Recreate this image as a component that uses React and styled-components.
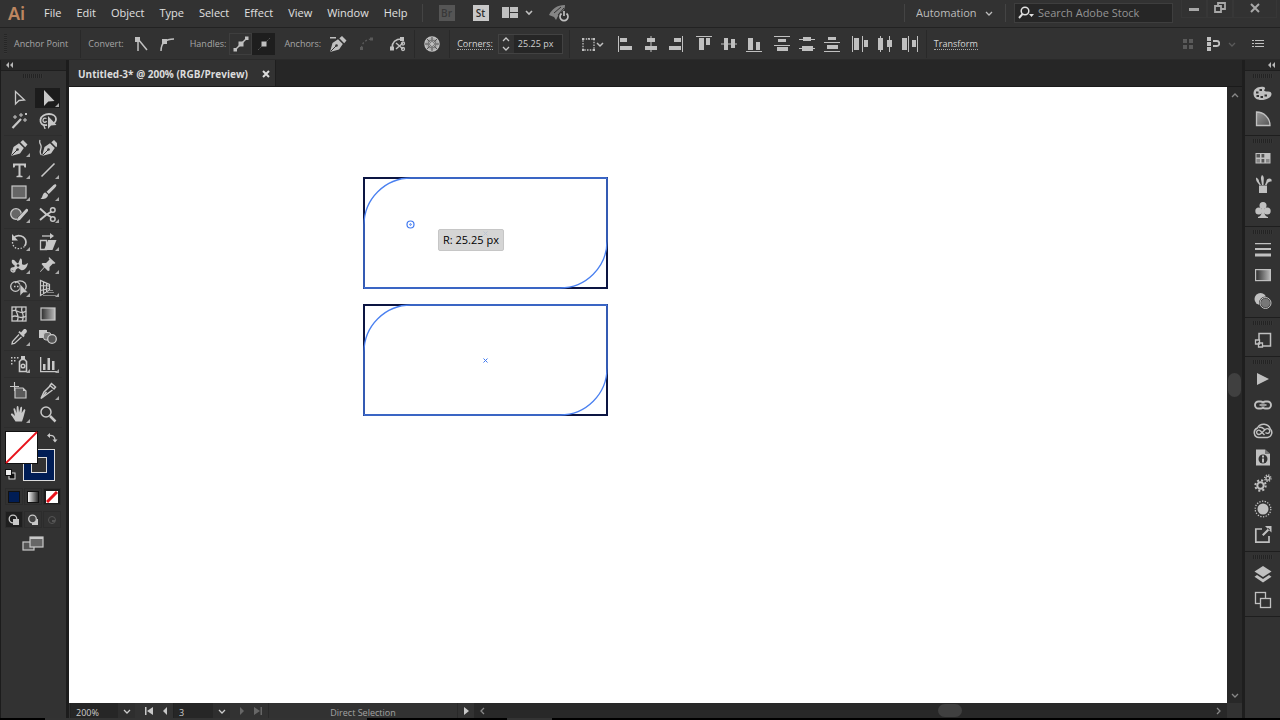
import React, { useState } from 'react'
import styled, { createGlobalStyle, css } from 'styled-components'

const GlobalStyle = createGlobalStyle`
  * {
    box-sizing: border-box;
  }

  body {
    margin: 0;
    overflow: hidden;
    background: #323232;
    color: #c8c8c8;
    font-family: 'Open Sans', 'Noto Sans', sans-serif;
    font-size: 9px;
  }

  button,
  input,
  select {
    margin: 0;
    padding: 0;
    border: none;
    border-radius: 0;
    outline: none;
    background: none;
    color: inherit;
    font: inherit;
  }

  svg {
    display: block;
    flex: none;
  }
`

const Wrapper = styled.div`
  height: 100vh;
  display: flex;
  flex-direction: column;
`

/* menu bar */

const MenuBar = styled.header`
  height: 28px;
  flex: none;
  display: flex;
  align-items: center;
  border-bottom: 1px solid #222;
  padding: 0 3px 2px 8px;
  font-size: 11px;
  color: #e0e0e0;
`

const Logo = styled.span`
  width: 36px;
  font-family: 'Noto Sans', sans-serif;
  font-size: 18px;
  font-weight: 600;
  line-height: 24px;
  color: #bd8660;
`

const Menu = styled.nav`
  display: flex;
  gap: 15px;
`

const MenuItem = styled.button`
  line-height: 24px;
`

const Separator = styled.span`
  width: 1px;
  height: ${({ $tall }) => ($tall ? '28px' : '18px')};
  flex: none;
  background: ${({ $tall }) => ($tall ? '#292929' : '#444')};
`

const MenuExtras = styled.div`
  display: flex;
  align-items: center;
  gap: 13px;
  margin-left: 14px;
`

const AppBadge = styled.button`
  width: 16px;
  height: 16px;
  line-height: 16px;
  margin-left: ${({ $dim }) => ($dim ? '3px' : '5px')};
  font-size: 10px;
  font-weight: 600;
  background: ${({ $dim }) => ($dim ? '#555' : '#c8c8c8')};
  color: ${({ $dim }) => ($dim ? '#383838' : '#2c2c2c')};
`

const MenuRight = styled.div`
  display: flex;
  align-items: center;
  margin-left: auto;
`

const Dropdown = styled.label`
  display: grid;
  grid-template-columns: 1fr ${({ $arrow }) => $arrow}px;
  align-items: center;
  justify-items: center;

  select {
    grid-area: 1 / 1 / 2 / 3;
    justify-self: stretch;
    appearance: none;
    padding-right: ${({ $arrow }) => $arrow}px;
  }

  svg {
    grid-area: 1 / 2;
    pointer-events: none;
  }
`

const WorkspaceDropdown = styled(Dropdown)`
  margin: 0 4px 0 11px;
  color: #bdbdbd;
`

const Searchbar = styled.label`
  width: 159px;
  height: 20px;
  display: flex;
  align-items: center;
  gap: 4px;
  margin: 0 8px;
  padding-left: 3px;
  border: 1px solid #3e3e3e;
  background: #262626;

  input {
    width: 130px;
    color: #ccc;
  }

  input::placeholder {
    color: #949494;
  }
`

const WindowButton = styled.button`
  width: ${({ $wide }) => ($wide ? '44px' : '26px')};
  height: 18px;
  display: flex;
  align-items: center;
  justify-content: center;
  margin-bottom: 8px;
  border: 1px solid #373737;
  border-top: none;
  color: #a8a8a8;
`

/* control bar */

const ControlBar = styled.div`
  height: 32px;
  flex: none;
  display: flex;
  align-items: center;
  padding-left: 4px;
  border-bottom: 1px solid #2a2a2a;
`

const SideGrip = styled.span`
  width: 3px;
  height: 20px;
  background: repeating-linear-gradient(#262626 0 1px, #363636 1px 2px);
`

const Label = styled.span`
  margin: 0 3px 0 7px;
  color: #a6a6a6;
  white-space: nowrap;
`

const LinkButton = styled.button`
  border-bottom: 1px dotted #aaa;
  line-height: 11px;
  color: #d6d6d6;
`

const ControlButton = styled.button`
  width: ${({ $width }) => $width || 25}px;
  height: 22px;
  display: flex;
  align-items: center;
  justify-content: center;
  color: #c0c0c0;
  ${({ $framed }) => $framed && 'border: 1px solid #3e3e3e;'}
  ${({ $active }) => $active && 'background: #1e1e1e;'}
  &:disabled {
    color: #5a5a5a;
  }
`

const ButtonGroup = styled.div`
  display: flex;
  margin-right: ${({ $gap }) => $gap || 0}px;
`

const Spacer = styled.span`
  width: ${({ $width }) => $width}px;
`

const Stepper = styled.div`
  width: 65px;
  height: 20px;
  display: flex;
  margin: 0 6px 0 5px;
  border: 1px solid #424242;

  input {
    flex: 1;
    min-width: 0;
    padding-left: 4px;
    background: #262626;
    color: #d0d0d0;
  }
`

const StepButtons = styled.div`
  width: 15px;
  display: flex;
  flex-direction: column;
  justify-content: space-evenly;
`

const StepButton = styled.button`
  height: 8px;
  display: flex;
  align-items: center;
  justify-content: center;
`

const ControlRight = styled.div`
  display: flex;
  align-items: center;
  margin-left: auto;
  padding-right: 10px;
`

/* workspace */

const Workspace = styled.main`
  flex: 1;
  min-height: 0;
  display: flex;
`

const Toolbox = styled.aside`
  width: 69px;
  flex: none;
  border: 0 solid #1c1c1c;
  border-width: 0 3px 0 1px;
`

const PanelHeader = styled.div`
  height: 11px;
  display: flex;
  align-items: center;
  justify-content: ${({ $right }) => ($right ? 'flex-end' : 'flex-start')};
  padding: 0 5px;
  border-bottom: 1px solid #1e1e1e;
  background: #282828;
`

const Grip = styled.div`
  width: 20px;
  height: 4px;
  margin: 0 auto;
  background: repeating-linear-gradient(90deg, #232323 0 1px, #363636 1px 2px);
`

const ToolList = styled.div`
  padding: 3px 4px 0 3px;
`

const ToolGroup = styled.div`
  display: grid;
  grid-template-columns: 1fr 1fr;
  grid-auto-rows: ${({ $row }) => $row}px;
  place-items: center;
  margin-bottom: 1px;
  padding-bottom: ${({ $gap }) => $gap}px;
  border-bottom: 1px solid #2d2d2d;

  &:nth-child(2) {
    margin-top: 8px;
  }
`

const Tool = styled.button`
  position: relative;
  width: 25px;
  height: 20px;
  display: flex;
  align-items: center;
  justify-content: center;
  background: ${({ $active }) => ($active ? '#1c1c1c' : 'none')};

  ${({ $more }) =>
    $more &&
    css`
      &::after {
        content: '';
        position: absolute;
        right: 1px;
        bottom: 1px;
        border: 2px solid transparent;
        border-right-color: #aaa;
        border-bottom-color: #aaa;
      }
    `}
`

const Swatches = styled.div`
  position: relative;
  height: 56px;
  margin-top: 1px;
`

const Swatch = styled.button`
  position: absolute;
  left: ${({ $left }) => $left}px;
  top: ${({ $top }) => $top}px;
`

const SmallRow = styled.div`
  display: grid;
  grid-template-columns: repeat(3, 19px);
  height: 23px;
  place-items: center;
`

const SmallButton = styled.button`
  width: 18px;
  height: 17px;
  display: flex;
  align-items: center;
  justify-content: center;
  border: 1px solid #2c2c2c;
  background: ${({ $active }) => ($active ? '#1e1e1e' : 'none')};
`

const ScreenMode = styled.button`
  width: 100%;
  height: 20px;
  display: flex;
  align-items: center;
  justify-content: center;
  margin-top: 3px;
`

const Document = styled.section`
  flex: 1;
  min-width: 0;
  display: flex;
  flex-direction: column;
`

const TabStrip = styled.div`
  height: 27px;
  flex: none;
  display: flex;
  border-bottom: 1px solid #1a1a1a;
  background: #262626;
`

const Tab = styled.div`
  display: flex;
  align-items: center;
  gap: 14px;
  padding: 2px 5px 0 9px;
  border-right: 1px solid #1e1e1e;
  background: #323232;
  color: #dcdcdc;
  font-size: 10px;
  font-weight: 700;
`

const CanvasRow = styled.div`
  flex: 1;
  min-height: 0;
  display: flex;
`

const Canvas = styled.div`
  position: relative;
  flex: 1;
  min-width: 0;
  overflow: hidden;
  background: #fff;
`

const Tooltip = styled.div`
  position: absolute;
  left: 369px;
  top: 142px;
  padding: 0 4px;
  border: 1px solid #c6c6c6;
  border-radius: 2px;
  background: rgba(207, 207, 207, 0.88);
  color: #000;
  font-size: 11px;
  line-height: 20px;
  white-space: nowrap;
`

const VerticalScroll = styled.div`
  width: 15px;
  flex: none;
  display: flex;
  flex-direction: column;
  align-items: center;
  justify-content: space-between;
  padding: 4px 0;
  background: #282828;
  color: #888;
`

const Thumb = styled.span`
  width: ${({ $wide }) => ($wide ? '24px' : '13px')};
  height: ${({ $wide }) => ($wide ? '13px' : '24px')};
  margin: ${({ $wide }) => ($wide ? '0 0 0 27%' : '0 0 20px')};
  border-radius: 7px;
  background: #404040;
`

const StatusBar = styled.footer`
  height: 15px;
  flex: none;
  display: flex;
  align-items: center;
  padding-left: 1px;
  line-height: 15px;
`

const StatusDropdown = styled(Dropdown)`
  width: ${({ $width }) => $width}px;
  height: 15px;
  margin-right: 4px;
  border-left: 1px solid #222;
  color: #ccc;

  select {
    height: 15px;
    padding-top: 2px;
    padding-left: 5px;
    background: linear-gradient(90deg, #262626 calc(100% - 17px), #2e2e2e 0);
  }
`

const StatusButton = styled.button`
  width: 16px;
  height: 15px;
  display: flex;
  align-items: center;
  justify-content: center;

  &:disabled {
    color: #666;
  }
`

const StatusText = styled.span`
  width: 190px;
  height: 15px;
  margin-left: 2px;
  padding-top: 2px;
  border: 0 solid #292929;
  border-width: 0 1px;
  text-align: center;
  color: #a2a2a2;
`

const HorizontalScroll = styled.div`
  flex: 1;
  height: 15px;
  display: flex;
  align-items: center;
  justify-content: space-between;
  margin-right: 15px;
  padding: 0 5px 0 4px;
  background: #282828;
  color: #888;
`

const Dock = styled.aside`
  width: 38px;
  flex: none;
  border-left: 3px solid #1e1e1e;
`

const DockGroup = styled.div`
  padding: 3px 0;
  border-bottom: 1px solid #1e1e1e;
`

const DockButton = styled.button`
  width: 100%;
  height: 26px;
  display: flex;
  align-items: center;
  justify-content: center;
  color: #c0c0c0;
`

const DockGrip = styled(Grip)`
  margin-bottom: 2px;
`

const Taskbar = styled.div`
  height: 2px;
  flex: none;
  background: linear-gradient(
    90deg,
    #000 45px,
    #333 45px 367px,
    #000 367px 507px,
    #333 507px 552px,
    #000 552px
  );
`

const Icon = ({ w = 18, h = 18, children }) => (
  <svg width={w} height={h} viewBox={`0 0 ${w} ${h}`} fill="none" stroke="none" aria-hidden="true">
    {children}
  </svg>
)

const line = { stroke: 'currentColor', strokeWidth: 1.3, fill: 'none' }
const solid = { fill: 'currentColor' }

const Chevron = ({ dir = 'down' }) => {
  const d = {
    down: 'M1 3l3 3 3-3',
    up: 'M1 6l3-3 3 3',
    left: 'M6 1L3 4l3 3',
    right: 'M3 1l3 3-3 3',
  }[dir]
  return (
    <Icon w={8} h={8}>
      <path d={d} {...line} />
    </Icon>
  )
}

const DoubleArrow = () => (
  <Icon w={7} h={6}>
    <path d="M3 0v6L0 3zM7 0v6L4 3z" fill="#b8b8b8" />
  </Icon>
)

const penNib = (
  <>
    <path d="M1 17L3.500 8 9 4.300l4.800 4.800L10 14.500zM10.300 3.300L13 1l4.500 4.500-2.300 2.800z" {...solid} />
    <path d="M1.500 16.500L7 11" stroke="#323232" />
    <circle cx="7.500" cy="10.500" r="1.300" fill="#323232" />
  </>
)

const toolIcons = {
  selection: <path d="M5.500 2.500v12.500l3.500-3.500 5.500-.5z" {...line} />,
  direct: <path d="M5 1v16l4.300-4.500 6.200-.5z" {...solid} />,
  wand: (
    <>
      <path d="M2.500 16L11 7" stroke="currentColor" strokeWidth="2.200" />
      <path d="M11 1v4M9 3h4M5 3v4M3 5h4M15 6v4M13 8h4M15 1l2 2M15 3l2-2" stroke="currentColor" />
    </>
  ),
  lasso: (
    <>
      <path d="M8 13C3 14 1 11 1.500 7.500 2 4 6 2 10 2s7 2 7 5-1 3-2 4" {...line} strokeWidth="1.800" />
      <path d="M7.500 6.500c-2-1-3.500 0-3.500 2s3 2.500 3.500.5M5 12c-1 2 1 3 1 5" {...line} />
      <path d="M9 4v13l3-3.500 5.500-.5z" {...solid} />
    </>
  ),
  pen: penNib,
  curvature: (
    <>
      <g transform="translate(2 0)">{penNib}</g>
      <path d="M1 1c-1.500 4 2 4 1 8-.5 3-2 5 .5 7" {...line} />
    </>
  ),
  type: <path d="M3 2.500h13v4h-1.500l-.8-2H10.500v10l2 .5v1.300h-6V15l2-.5v-10H5.300l-.8 2H3z" {...solid} />,
  line: <path d="M2.500 15.500l13-13" {...line} strokeWidth="1.600" />,
  rectangle: <rect x="2" y="3" width="14" height="12" stroke="currentColor" strokeWidth="1.200" fill="#666" />,
  brush: (
    <g {...solid}>
      <path d="M17 1.500c.8.800.2 1.800-1 3.300L9.800 11 7.500 8.700l6.300-6C15.300 1.200 16.300.8 17 1.500z" />
      <path d="M6.500 9.500l2.500 2.300c0 3-3.500 4.700-7.500 4.200C4 14.500 3 10 6.500 9.500z" />
    </g>
  ),
  shaper: (
    <>
      <circle cx="6" cy="9" r="5.300" fill="#666" stroke="currentColor" strokeWidth="1.300" />
      <path d="M8.500 14.500L18 4.500" stroke="#323232" strokeWidth="4" />
      <path d="M7 16l1-3.500L16 4c1-1 3 1 2 2l-8 9z" {...solid} />
    </>
  ),
  scissors: (
    <>
      <circle cx="13.800" cy="5" r="2.300" {...line} strokeWidth="1.500" />
      <circle cx="13.800" cy="14" r="2.300" {...line} strokeWidth="1.500" />
      <path d="M12.500 6.500L7 10 1 15M12 12L7 9 1 3.500" stroke="currentColor" strokeWidth="2" />
    </>
  ),
  rotate: (
    <>
      <path d="M3.500 5c4-4.500 12-2 12.500 4 0 2-1 3.500-1.500 4" {...line} strokeWidth="1.700" />
      <path d="M2 1v6.500h6z" {...solid} />
      <path d="M2.500 9c0 6 6 9 12 4.500" {...line} strokeDasharray="1.500 1.500" />
    </>
  ),
  shear: (
    <>
      <path d="M3 3h9" {...line} />
      <path d="M11 0l4 3-4 3z" {...solid} />
      <path d="M1.500 7.500h6v9h-6z" {...line} />
      <path d="M9 7h8.500l-4 10H5z" {...solid} />
    </>
  ),
  width: (
    <>
      <path d="M2 4c2-1 3 1 4 2l2 2 2-5c1-1 2 0 2 2v3c2 2 4 0 6-1-1 5-4 8-7 7l-3-2-4 3-3-1 4-4c-2-2-4-3-3-6z" {...solid} />
      <circle cx="3" cy="14" r="2" {...line} />
      <circle cx="8" cy="9.500" r="1.800" fill="#323232" stroke="currentColor" />
    </>
  ),
  pin: <path d="M10 1l6.500 6-1.500 1-1-.5-3.500 3.500v3.500L9 15l-3.500-3.500L1.500 16 1 15.500l4-4.500L2.500 8 3.500 7H7l3.500-3.500-.8-1.300z" {...solid} />,
  shapeBuilder: (
    <>
      <circle cx="5.500" cy="7.500" r="4.800" {...line} />
      <path d="M5 4C7 1.500 12 1 15 4c2 3 1 6-1 8" {...line} />
      <path d="M4 7.500h8" {...line} strokeDasharray="1.500 1.500" />
      <path d="M10 5v12l3-3.200 5-.3z" fill="currentColor" stroke="#323232" strokeWidth=".6" />
    </>
  ),
  perspective: (
    <>
      <path d="M1.500 1.500v15L10.500 11V5.500zM1.500 6.500L10.500 7M1.500 11.500l9-2M4.500 3v12M7.500 4.500v9" {...line} strokeWidth="1.200" />
      <path d="M10 11.500h4M8 13.500h7M4 16.500h13" stroke="#888" strokeWidth="1" />
    </>
  ),
  mesh: (
    <>
      <rect x="2" y="2" width="14" height="14" {...line} />
      <path d="M2 6c5-3 8 5 14 0M2 12c5-4 8 4 14-1M6 2c-2 5 5 8 1 14M12 2c-2 5 4 8 0 14" {...line} strokeWidth="1.300" />
    </>
  ),
  gradient: (
    <>
      <defs>
        <linearGradient id="toolGradient">
          <stop stopColor="#2b2b2b" />
          <stop offset="1" stopColor="#bbb" />
        </linearGradient>
      </defs>
      <rect x="2" y="3" width="14" height="12" fill="url(#toolGradient)" stroke="currentColor" strokeWidth="1.200" />
    </>
  ),
  eyedropper: (
    <>
      <path d="M11 4.500l2.500-3c2-1.500 4.500 1 3 3L14 7l.8.800-1.500 1.500-5-5L9.800 3z" {...solid} />
      <path d="M9 6.500l-6.500 7L2 16l2.500-.5 7-6.500" {...line} />
    </>
  ),
  blend: (
    <>
      <rect x="0" y="2" width="8" height="8" {...solid} />
      <rect x="4.500" y="4.500" width="7.500" height="7.500" rx="2.500" fill="#777" stroke="currentColor" />
      <circle cx="13" cy="11" r="4.300" fill="#555" stroke="currentColor" strokeWidth="1.300" />
    </>
  ),
  sprayer: (
    <>
      <path d="M9.500 6.500l2-2h3l2 2v10h-7z" {...line} strokeWidth="1.600" />
      <path d="M11 1h4v3h-4zM1 2h1.500v1.500H1zM4 2h1.500v1.500H4zM7 2h1.500v1.500H7zM1 5h1.500v1.500H1zM4 5h1.500v1.500H4zM1 8h1.500v1.500H1z" {...solid} />
      <circle cx="13" cy="11" r="1.800" {...line} strokeWidth="1.500" />
    </>
  ),
  graph: <path d="M1 2h1.300v14H18v1.300H1zM4 9h2.500v6H4zM8.500 3H11v12H8.500zM13 6h2.500v9H13z" {...solid} />,
  artboard: (
    <>
      <path d="M4.500 0v9M0 4.500h9" {...line} strokeWidth="1.100" />
      <path d="M5 6h8l3 3v7H5z" fill="#5a5a5a" stroke="currentColor" strokeWidth="1.200" />
      <path d="M13 6v3h3z" {...solid} />
    </>
  ),
  slice: (
    <>
      <path d="M12.500 1.500l4 3.500-1.500 2-4-3.500zM11 4L5 10 2 16.500 13.500 8" {...line} strokeWidth="1.500" />
      <path d="M7.500 10L3.500 15" {...line} />
    </>
  ),
  hand: (
    <path
      d="M5.500 16.500C4 14 2.500 11.500 1 10c-.5-1.300.8-2 2-1l2 2L3.500 4.500c-.2-1.500 1.300-1.800 1.700-.5L6.500 8 6.700 2c.1-1.400 1.700-1.400 1.800 0L9 7.500l1.400-5c.4-1.300 1.900-.9 1.700.5L11.700 8l2-3.300c.8-1 2-.3 1.600.9-1.200 4-1.700 7-3.300 10.900z"
      {...solid}
    />
  ),
  zoom: (
    <>
      <circle cx="7" cy="7" r="5" {...line} strokeWidth="1.500" />
      <path d="M11 11l5.500 5.500" stroke="currentColor" strokeWidth="2.500" />
    </>
  ),
}

// [name, label, has a flyout]
const toolGroups = [
  {
    row: 23,
    gap: 3,
    tools: [['selection', 'Selection'], ['direct', 'Direct Selection', true], ['wand', 'Magic Wand'], ['lasso', 'Lasso']],
  },
  {
    row: 22,
    gap: 3,
    tools: [
      ['pen', 'Pen', true],
      ['curvature', 'Curvature'],
      ['type', 'Type', true],
      ['line', 'Line Segment', true],
      ['rectangle', 'Rectangle', true],
      ['brush', 'Paintbrush', true],
      ['shaper', 'Shaper', true],
      ['scissors', 'Scissors', true],
    ],
  },
  {
    row: 23,
    gap: 1,
    tools: [
      ['rotate', 'Rotate', true],
      ['shear', 'Shear', true],
      ['width', 'Width', true],
      ['pin', 'Puppet Warp', true],
      ['shapeBuilder', 'Shape Builder', true],
      ['perspective', 'Perspective Grid', true],
    ],
  },
  {
    row: 23,
    gap: 2,
    tools: [['mesh', 'Mesh'], ['gradient', 'Gradient'], ['eyedropper', 'Eyedropper', true], ['blend', 'Blend']],
  },
  { row: 23, gap: 2, tools: [['sprayer', 'Symbol Sprayer', true], ['graph', 'Column Graph', true]] },
  {
    row: 23,
    gap: 2,
    tools: [['artboard', 'Artboard'], ['slice', 'Slice', true], ['hand', 'Hand', true], ['zoom', 'Zoom']],
  },
]

const Gear = ({ cx, cy, r, tooth }) => (
  <>
    <circle cx={cx} cy={cy} r={r} {...line} strokeWidth={tooth} />
    <circle
      cx={cx}
      cy={cy}
      r={r + tooth}
      {...line}
      strokeWidth={tooth}
      strokeDasharray={(Math.PI * (r + tooth)) / 8}
    />
  </>
)

const dockIcons = {
  color: (
    <path
      fillRule="evenodd"
      d="M11 3C5 2 .5 5 .5 9.500S4 16 8.500 16c5 0 10-2.500 10-6 0-2.500-3-2.500-4.500-2.500-2.500.2-3.500-1-2.500-2 1-.8.800-2-.5-2.500zM3 7.500h2.500v2H3zM6.500 5H9v2H6.500zM3.500 11H6v2H3.500zM7.500 12H10v2H7.500zM11.500 10.500H14v2h-2.500z"
      {...solid}
    />
  ),
  guide: <path d="M3.500 2v13.500H17C17 8 11 2 3.500 2z" fill="url(#guideFill)" stroke="currentColor" strokeWidth="1.300" />,
  swatches: (
    <>
      <path d="M2.500 4h15v10.500h-15z" {...solid} />
      <path d="M3.500 5H7v3.500H3.500zM8.500 5h2.800v3.500H8.500zM8.500 10h2.800v3.500H8.500z" fill="#555" />
      <path d="M3.500 10H7v3.500H3.500zM13 10h3.500v3.500H13z" fill="#888" />
    </>
  ),
  brushes: (
    <g {...solid}>
      <path d="M6 10.500h8V18H6zM3 2.500C5 3 6 5 6 6.500L8 10H6.500L4.500 7.500C3 6 3 4 3 2.500z" />
      <path d="M9 0c1.500 1 2 2.500 1.800 4L10.500 10H9L8 4c-.3-2 .5-3 1-4zM12 10l1.500-4c0-1.500 1-2.500 3-2.500 1.500 0 2.500 1 2 3-1.500 0-2.500.5-3.500 1L13.500 10z" />
    </g>
  ),
  symbols: (
    <g {...solid}>
      <circle cx="10" cy="4.500" r="3.500" />
      <circle cx="5.800" cy="10" r="3.500" />
      <circle cx="14.200" cy="10" r="3.500" />
      <path d="M9 7h2c0 5 .5 8 4 9v1H5v-1c3.500-1 4-4 4-9z" />
    </g>
  ),
  stroke: <path d="M2 3h16v1.300H2zM2 8h16v2H2zM2 13.500h16v3H2z" {...solid} />,
  gradient: <rect x="2.600" y="3.600" width="14.800" height="11" fill="url(#toolGradient)" stroke="currentColor" strokeWidth="1.200" />,
  transparency: (
    <>
      <circle cx="7.500" cy="7" r="6" {...solid} />
      <circle cx="12.500" cy="11" r="5.500" fill="#777" stroke="#323232" strokeWidth="2" />
      <circle cx="12.500" cy="11" r="5.500" stroke="currentColor" />
    </>
  ),
  transform: (
    <>
      <path d="M6 9V2.500h11.500V15H10" {...line} strokeWidth="1.500" />
      <path d="M2.500 9h4v4h-4zM5.500 12h4v4h-4z" {...line} />
    </>
  ),
  play: <path d="M4 3l12 6-12 6z" {...solid} />,
  links: (
    <>
      <rect x="2" y="5.500" width="9" height="7" rx="3.500" {...line} strokeWidth="1.900" />
      <rect x="9" y="5.500" width="9" height="7" rx="3.500" {...line} strokeWidth="1.900" />
      <path d="M6 9h8" stroke="#323232" strokeWidth="3" />
      <path d="M6.500 9h7" stroke="currentColor" strokeWidth="1.500" />
    </>
  ),
  libraries: (
    <>
      <path d="M6 15.500h8.500a5 5 0 0 0 2.800-8.500A7 7 0 0 0 4.500 6 4.900 4.900 0 0 0 6 15.500z" {...line} strokeWidth="1.500" />
      <path
        d="M11.500 13L7.500 9C5 6.800 2.500 9.500 4 11.500c1.300 1.500 3 1 4 0l4.500-4.200c2-1.500 4.500 0 4.200 2-.3 2.200-2.700 2.700-4.200 1.200M6 5.500c3-1 4.500 1 6 2.500"
        {...line}
        strokeWidth="1.400"
      />
    </>
  ),
  info: (
    <>
      <path d="M3 1.500h9L17 6v11.500H3z" {...solid} />
      <path d="M12 1.500V6h5z" fill="#777" />
      <circle cx="10" cy="11" r="4.500" fill="#323232" />
      <path d="M9 7.500h2v2H9zM9 10.500h2v4H9z" {...solid} />
    </>
  ),
  actions: (
    <>
      <Gear cx={7.500} cy={11.500} r={3.200} tooth={2} />
      <Gear cx={14.800} cy={4.200} r={1.900} tooth={1.300} />
    </>
  ),
  appearance: (
    <>
      <circle cx="10" cy="9" r="5.500" {...solid} />
      <circle cx="10" cy="9" r="7.800" {...line} strokeDasharray="1.300 1.430" />
    </>
  ),
  exportAsset: (
    <>
      <path d="M9 3H2.800v13.200H16V10" {...line} strokeWidth="1.700" />
      <path d="M12 0h6.500v6.500zM9 8.500l1.500 1.500L17 3.500 15.500 2z" {...solid} />
    </>
  ),
  layers: (
    <g {...solid}>
      <path d="M10 1l8.500 5.500L10 12 1.500 6.500z" />
      <path d="M4 10l6 4 6-4 2.500 1.700L10 17.500l-8.500-5.800z" />
    </g>
  ),
  artboards: (
    <>
      <rect x="2.500" y="1.500" width="10" height="11" {...line} />
      <rect x="7.500" y="7.500" width="10" height="9" fill="#323232" stroke="currentColor" strokeWidth="1.300" />
    </>
  ),
}

const dockGroups = [
  ['color', 'guide'],
  ['swatches', 'brushes', 'symbols'],
  ['stroke', 'gradient', 'transparency'],
  ['transform'],
  ['play', 'links', 'libraries', 'info', 'actions', 'appearance', 'exportAsset'],
  ['layers', 'artboards'],
]

const alignIcons = [
  [
    ['Align Left', 'M1 1h1v16H1zM3 3h7v4H3zM3 11h12v4H3z'],
    ['Align Center', 'M8.500 1h1v16h-1zM5 3h8v4H5zM3 11h12v4H3z'],
    ['Align Right', 'M15 1h1v16h-1zM7 3h7v4H7zM2 11h12v4H2z'],
  ],
  [
    ['Align Top', 'M1 1h16v1H1zM4 3h5v12H4zM11 3h4v7h-4z'],
    ['Align Middle', 'M1 8.500h16v1H1zM4 3h4v12H4zM11 4h4v9h-4z'],
    ['Align Bottom', 'M1 16h16v1H1zM3 3h5v12H3zM11 7h4v8h-4z'],
  ],
  [
    ['Distribute Top', 'M1 1h16v1H1zM1 10h16v1H1zM5 4h8v3H5zM4 12h11v4H4z'],
    ['Distribute Middle', 'M1 4h16v1H1zM1 13h16v1H1zM5 2h8v4H5zM4 11h11v5H4z'],
    ['Distribute Bottom', 'M1 7h16v1H1zM1 16h16v1H1zM5 2h8v3H5zM4 10h11v4H4z'],
  ],
  [
    ['Distribute Left', 'M1 1h1v16H1zM11 1h1v16h-1zM3 3h5v12H3zM13 5h4v7h-4z'],
    ['Distribute Center', 'M4 1h1v16H4zM13 1h1v16h-1zM2 3h5v12H2zM11 5h5v7h-5z'],
    ['Distribute Right', 'M7 1h1v16H7zM16 1h1v16h-1zM1 3h5v12H1zM11 5h4v7h-4z'],
  ],
]

const menus = ['File', 'Edit', 'Object', 'Type', 'Select', 'Effect', 'View', 'Window', 'Help']

const Header = () => (
  <MenuBar>
    <Logo>Ai</Logo>
    <Menu>
      {menus.map(name => (
        <MenuItem key={name}>{name}</MenuItem>
      ))}
    </Menu>
    <MenuExtras>
      <Separator />
      <AppBadge $dim>Br</AppBadge>
      <AppBadge>St</AppBadge>
      <ControlButton $width={32} aria-label="Arrange Documents">
        <Icon w={32} h={14}>
          <path d="M0 1h7v11H0zM8 1h8v5H8zM8 7h8v5H8z" {...solid} />
          <path d="M24 5l3 3 3-3" {...line} strokeWidth="1.600" />
        </Icon>
      </ControlButton>
      <ControlButton aria-label="GPU Performance">
        <Icon w={20}>
          <path d="M0 11C3 5 8 1 16 1c0 3-1 5-3 7l-3 2-3 6-2-3z" fill="#858585" />
          <path d="M5 9l7-6M9 11l6-7" stroke="#323232" />
          <circle cx="15" cy="12.500" r="5.500" fill="#323232" />
          <path d="M12.500 9.500a4 4 0 1 0 5 0M15 7v5" {...line} strokeWidth="1.700" />
        </Icon>
      </ControlButton>
    </MenuExtras>
    <MenuRight>
      <Separator />
      <WorkspaceDropdown $arrow={24}>
        <select aria-label="Workspace">
          <option>Automation</option>
        </select>
        <Chevron />
      </WorkspaceDropdown>
      <Separator />
      <Searchbar>
        <Icon w={16} h={14}>
          <circle cx="7" cy="5" r="3.800" {...line} strokeWidth="1.500" />
          <path d="M4.500 8L1 12" {...line} strokeWidth="1.900" />
          <path d="M11 8h5l-2.500 3z" {...solid} />
        </Icon>
        <input aria-label="Search Adobe Stock" placeholder="Search Adobe Stock" />
      </Searchbar>
      <WindowButton aria-label="Minimize">
        <Icon w={10} h={10}>
          <path d="M0 5h10v3H0z" {...solid} />
        </Icon>
      </WindowButton>
      <WindowButton aria-label="Restore">
        <Icon w={12} h={12}>
          <path d="M1 4h6v6H1zM4 4V1h7v6H7" {...line} strokeWidth="1.800" />
        </Icon>
      </WindowButton>
      <WindowButton $wide aria-label="Close">
        <Icon w={10} h={10}>
          <path d="M1 1l8 8M9 1L1 9" {...line} strokeWidth="2" />
        </Icon>
      </WindowButton>
    </MenuRight>
  </MenuBar>
)

const Controls = () => {
  const [radius, setRadius] = useState('25.25 px')
  return (
    <ControlBar>
      <SideGrip />
      <Label>Anchor Point</Label>
      <Spacer $width={9} />
      <Separator $tall />
      <Label>Convert:</Label>
      <ButtonGroup $gap={2}>
        <ControlButton $width={27} aria-label="Convert to corner">
          <Icon>
            <path d="M7 3v13M7 4l9 11" {...line} strokeWidth="1.500" />
            <path d="M4 2h5v5H4z" {...solid} />
          </Icon>
        </ControlButton>
        <ControlButton $width={27} aria-label="Convert to smooth">
          <Icon>
            <path d="M3 16C3 9 6 4 16 4" {...line} strokeWidth="1.500" />
            <path d="M4 4h5v5H4z" {...solid} />
          </Icon>
        </ControlButton>
      </ButtonGroup>
      <Label>Handles:</Label>
      <ButtonGroup $gap={2}>
        <ControlButton $width={23} $framed aria-label="Show handles">
          <Icon>
            <path d="M3 15L15 3" {...line} strokeWidth="1.500" />
            <path d="M6.500 6.500h5v5h-5zM1.500 13h3.500v3.500H1.500zM13 1.500h3.500V5H13z" {...solid} />
          </Icon>
        </ControlButton>
        <ControlButton $width={23} $active aria-label="Hide handles">
          <Icon>
            <path d="M3 15L15 3" stroke="#555" strokeDasharray="2 1" />
            <path d="M6.500 6.500h5v5h-5z" {...solid} />
          </Icon>
        </ControlButton>
      </ButtonGroup>
      <Label>Anchors:</Label>
      <ButtonGroup $gap={2}>
        <ControlButton $width={28} aria-label="Remove anchor">
          <Icon>
            {penNib}
            <path d="M1 2h6v1.500H1z" {...solid} />
          </Icon>
        </ControlButton>
        <ControlButton $width={30} disabled aria-label="Connect end points">
          <Icon>
            <path d="M3.500 13C4 8 8 4 14 4" {...line} strokeDasharray="2 2" />
            <path d="M2 12h3v3H2zM12 2.500h3v3h-3z" {...solid} />
          </Icon>
        </ControlButton>
        <ControlButton $width={30} aria-label="Cut path">
          <Icon>
            <path d="M4 13C4 8 7 4 14 4" {...line} strokeWidth="1.500" />
            <path d="M2 11.500h4v4H2zM12 2h4v4h-4z" {...solid} />
            <path d="M8 8l7 6M8 14l7-6" {...line} strokeWidth="1.500" />
            <circle cx="15" cy="8.500" r="1.500" {...line} />
            <circle cx="15" cy="14" r="1.500" {...line} />
          </Icon>
        </ControlButton>
      </ButtonGroup>
      <Separator $tall />
      <ControlButton $width={34} aria-label="Recolor Artwork">
        <Icon>
          <circle cx="9" cy="9" r="7" fill="#aaa" stroke="currentColor" strokeWidth="1.500" />
          <path d="M9 2v14M2 9h14M4 4l10 10M14 4L4 14" stroke="#555" />
          <circle cx="9" cy="9" r="4" stroke="#777" />
          <circle cx="9" cy="9" r="2" {...solid} />
        </Icon>
      </ControlButton>
      <Separator $tall />
      <Spacer $width={7} />
      <LinkButton>Corners:</LinkButton>
      <Stepper>
        <StepButtons>
          <StepButton aria-label="Increase radius">
            <Chevron dir="up" />
          </StepButton>
          <StepButton aria-label="Decrease radius">
            <Chevron />
          </StepButton>
        </StepButtons>
        <input aria-label="Corner radius" value={radius} onChange={e => setRadius(e.target.value)} />
      </Stepper>
      <Separator $tall />
      <ControlButton $width={44} aria-label="Isolate Selected Object">
        <Icon w={24}>
          <path d="M3 4h11v11H3z" {...line} strokeDasharray="1.500 1.250" />
          <path d="M2 3h2v2H2zM13 3h2v2h-2zM2 14h2v2H2zM13 14h2v2h-2zM8 3h1.500v1.500H8z" {...solid} />
          <path d="M17 8l3 3 3-3" {...line} strokeWidth="1.500" />
        </Icon>
      </ControlButton>
      {alignIcons.map(group => (
        <ButtonGroup key={group[0][0]} $gap={3}>
          {group.map(([label, d]) => (
            <ControlButton key={label} aria-label={label}>
              <Icon>
                <path d={d} {...solid} />
              </Icon>
            </ControlButton>
          ))}
        </ButtonGroup>
      ))}
      <Separator $tall />
      <Spacer $width={7} />
      <LinkButton>Transform</LinkButton>
      <ControlRight>
        <ControlButton disabled aria-label="Snap to grid">
          <Icon w={12} h={12}>
            <path d="M1 1h4v4H1zM7 1h4v4H7zM1 7h4v4H1zM7 7h4v4H7z" {...solid} />
          </Icon>
        </ControlButton>
        <ControlButton aria-label="Snap to point">
          <Icon w={14} h={14}>
            <path d="M1 0h4v4H1zM1 5h4v4H1zM1 10h4v4H1z" {...solid} />
            <path d="M7 4h4c3 0 3 5 0 5H7" {...line} strokeWidth="1.800" />
          </Icon>
        </ControlButton>
        <ControlButton $width={14} disabled aria-label="Snap options">
          <Chevron />
        </ControlButton>
        <Spacer $width={6} />
        <ControlButton aria-label="Panel menu">
          <Icon w={12} h={10}>
            <path d="M0 1h2v1H0zM3 1h9v1H3zM0 4h2v1H0zM3 4h9v1H3zM0 7h2v1H0zM3 7h9v1H3z" {...solid} />
          </Icon>
        </ControlButton>
      </ControlRight>
    </ControlBar>
  )
}

const Tools = () => {
  const [active, setActive] = useState('direct')
  return (
    <Toolbox>
      <PanelHeader>
        <DoubleArrow />
      </PanelHeader>
      <ToolList>
        <Grip />
        {toolGroups.map(({ row, gap, tools }) => (
          <ToolGroup key={tools[0][0]} $row={row} $gap={gap}>
            {tools.map(([name, label, more]) => (
              <Tool key={name} $active={name === active} $more={more} aria-label={label} onClick={() => setActive(name)}>
                <Icon>{toolIcons[name]}</Icon>
              </Tool>
            ))}
          </ToolGroup>
        ))}
        <Swatches>
          <Swatch $left={19} $top={20} aria-label="Stroke">
            <Icon w={32} h={32}>
              <rect x=".5" y=".5" width="31" height="31" fill="#001d55" stroke="#ddd" />
              <rect x="8.500" y="8.500" width="15" height="15" fill="#323232" stroke="#ddd" />
            </Icon>
          </Swatch>
          <Swatch $left={1} $top={2} aria-label="Fill">
            <Icon w={33} h={33}>
              <rect x=".5" y=".5" width="32" height="32" fill="#fff" stroke="#111" />
              <path d="M1 32L32 1" stroke="#e8111a" strokeWidth="1.800" />
            </Icon>
          </Swatch>
          <Swatch $left={42} $top={3} aria-label="Swap Fill and Stroke">
            <Icon w={12} h={12}>
              <path d="M3 3.500c4-.5 6 1 6 5" {...line} />
              <path d="M4 1v5L1 3.500zM6.500 7.500h5L9 10.500z" {...solid} />
            </Icon>
          </Swatch>
          <Swatch $left={1} $top={40} aria-label="Default Fill and Stroke">
            <Icon w={11} h={11}>
              <rect x="4" y="4" width="6" height="6" fill="#111" stroke="#ddd" />
              <rect x=".5" y=".5" width="6" height="6" fill="#eee" stroke="#111" />
            </Icon>
          </Swatch>
        </Swatches>
        <SmallRow>
          <SmallButton aria-label="Color">
            <Icon w={12} h={12}>
              <rect x=".5" y=".5" width="11" height="11" fill="#001d55" stroke="#111" />
            </Icon>
          </SmallButton>
          <SmallButton aria-label="Gradient">
            <Icon w={12} h={12}>
              <defs>
                <linearGradient id="smallGradient">
                  <stop stopColor="#fff" />
                  <stop offset="1" stopColor="#222" />
                </linearGradient>
              </defs>
              <rect x=".5" y=".5" width="11" height="11" fill="url(#smallGradient)" stroke="#111" />
            </Icon>
          </SmallButton>
          <SmallButton $active aria-label="None">
            <Icon w={12} h={12}>
              <path d="M0 0h12v12H0z" fill="#fff" />
              <path d="M1 11L11 1" stroke="#e8111a" strokeWidth="3" />
            </Icon>
          </SmallButton>
        </SmallRow>
        <SmallRow>
          <SmallButton $active aria-label="Draw Normal">
            <Icon w={12} h={12}>
              <circle cx="5" cy="5" r="3.800" {...line} />
              <path d="M5 5h6v6H5z" {...solid} />
            </Icon>
          </SmallButton>
          <SmallButton aria-label="Draw Behind">
            <Icon w={12} h={12}>
              <path d="M5 5h6v6H5z" {...solid} />
              <circle cx="5.500" cy="5" r="3.800" fill="#444" stroke="currentColor" strokeWidth="1.300" />
            </Icon>
          </SmallButton>
          <SmallButton disabled aria-label="Draw Inside">
            <Icon w={12} h={12}>
              <circle cx="6" cy="6" r="3.500" stroke="#555" />
              <path d="M6 6h3v2H6z" fill="#555" />
            </Icon>
          </SmallButton>
        </SmallRow>
        <ScreenMode aria-label="Change Screen Mode">
          <Icon w={22} h={16}>
            <rect x="1" y="6" width="11" height="8" fill="#555" stroke="currentColor" strokeWidth="1.200" />
            <rect x="8" y="1" width="13" height="10" fill="#666" stroke="currentColor" strokeWidth="1.200" />
            <path d="M8 1h13v2H8z" {...solid} />
          </Icon>
        </ScreenMode>
      </ToolList>
    </Toolbox>
  )
}

const Shape = ({ y, height }) => (
  <g transform={`translate(295 ${y})`} fill="none">
    <rect width="243" height={height} stroke="#0c1542" strokeWidth="2" />
    <path
      d={`M47 0h196v${height - 47}a47 47 0 0 1-47 47H0V47A47 47 0 0 1 47 0z`}
      stroke="#4a80f0"
      strokeWidth="1.300"
    />
  </g>
)

const Artboard = () => (
  <Canvas>
    <svg width="100%" height="100%" aria-label="Artwork">
      <Shape y={91} height={110} />
      <Shape y={218} height={110} />
      <g stroke="#3f78f0" fill="none">
        <circle cx="341.500" cy="137.500" r="3.500" strokeWidth="1.200" />
        <circle cx="341.500" cy="137.500" r=".8" />
        <path d="M414.500 144.500l4 4M418.500 144.500l-4 4M414.500 271.500l4 4M418.500 271.500l-4 4" />
      </g>
    </svg>
    <Tooltip role="tooltip">R: 25.25 px</Tooltip>
  </Canvas>
)

const Status = () => (
  <StatusBar>
    <StatusDropdown $width={65} $arrow={17}>
      <select aria-label="Zoom">
        <option>200%</option>
      </select>
      <Chevron />
    </StatusDropdown>
    <Spacer $width={2} />
    <StatusButton aria-label="First artboard">
      <Icon w={10} h={10}>
        <path d="M1 1h1.500v8H1zM9 1v8L3 5z" {...solid} />
      </Icon>
    </StatusButton>
    <StatusButton aria-label="Previous artboard">
      <Icon w={10} h={10}>
        <path d="M7 1v8L3 5z" {...solid} />
      </Icon>
    </StatusButton>
    <StatusDropdown $width={57} $arrow={17}>
      <select aria-label="Artboard">
        <option>3</option>
      </select>
      <Chevron />
    </StatusDropdown>
    <StatusButton disabled aria-label="Next artboard">
      <Icon w={10} h={10}>
        <path d="M3 1v8l4-4z" {...solid} />
      </Icon>
    </StatusButton>
    <StatusButton disabled aria-label="Last artboard">
      <Icon w={10} h={10}>
        <path d="M7.500 1H9v8H7.500zM1 1v8l6-4z" {...solid} />
      </Icon>
    </StatusButton>
    <StatusText>Direct Selection</StatusText>
    <StatusButton aria-label="Status menu">
      <Icon w={10} h={10}>
        <path d="M3 1v8l5-4z" {...solid} />
      </Icon>
    </StatusButton>
    <HorizontalScroll>
      <Chevron dir="left" />
      <Thumb $wide />
      <Chevron dir="right" />
    </HorizontalScroll>
  </StatusBar>
)

const Panels = () => (
  <Dock>
    <PanelHeader $right>
      <DoubleArrow />
    </PanelHeader>
    <svg width="0" height="0">
      <defs>
        <linearGradient id="guideFill" x1="0" y1="0" x2="1" y2="1">
          <stop stopColor="#999" />
          <stop offset="1" stopColor="#555" />
        </linearGradient>
      </defs>
    </svg>
    {dockGroups.map(group => (
      <DockGroup key={group[0]}>
        <DockGrip />
        {group.map(name => (
          <DockButton key={name} aria-label={name}>
            <Icon w={20}>{dockIcons[name]}</Icon>
          </DockButton>
        ))}
      </DockGroup>
    ))}
  </Dock>
)

const App = () => (
  <>
    <GlobalStyle />
    <Wrapper>
      <Header />
      <Controls />
      <Workspace>
        <Tools />
        <Document>
          <TabStrip>
            <Tab>
              Untitled-3* @ 200% (RGB/Preview)
              <button aria-label="Close document">
                <Icon w={8} h={8}>
                  <path d="M1 1l6 6M7 1L1 7" {...line} strokeWidth="2" />
                </Icon>
              </button>
            </Tab>
          </TabStrip>
          <CanvasRow>
            <Artboard />
            <VerticalScroll>
              <Chevron dir="up" />
              <Thumb />
              <Chevron />
            </VerticalScroll>
          </CanvasRow>
          <Status />
        </Document>
        <Panels />
      </Workspace>
      <Taskbar />
    </Wrapper>
  </>
)

export default App
